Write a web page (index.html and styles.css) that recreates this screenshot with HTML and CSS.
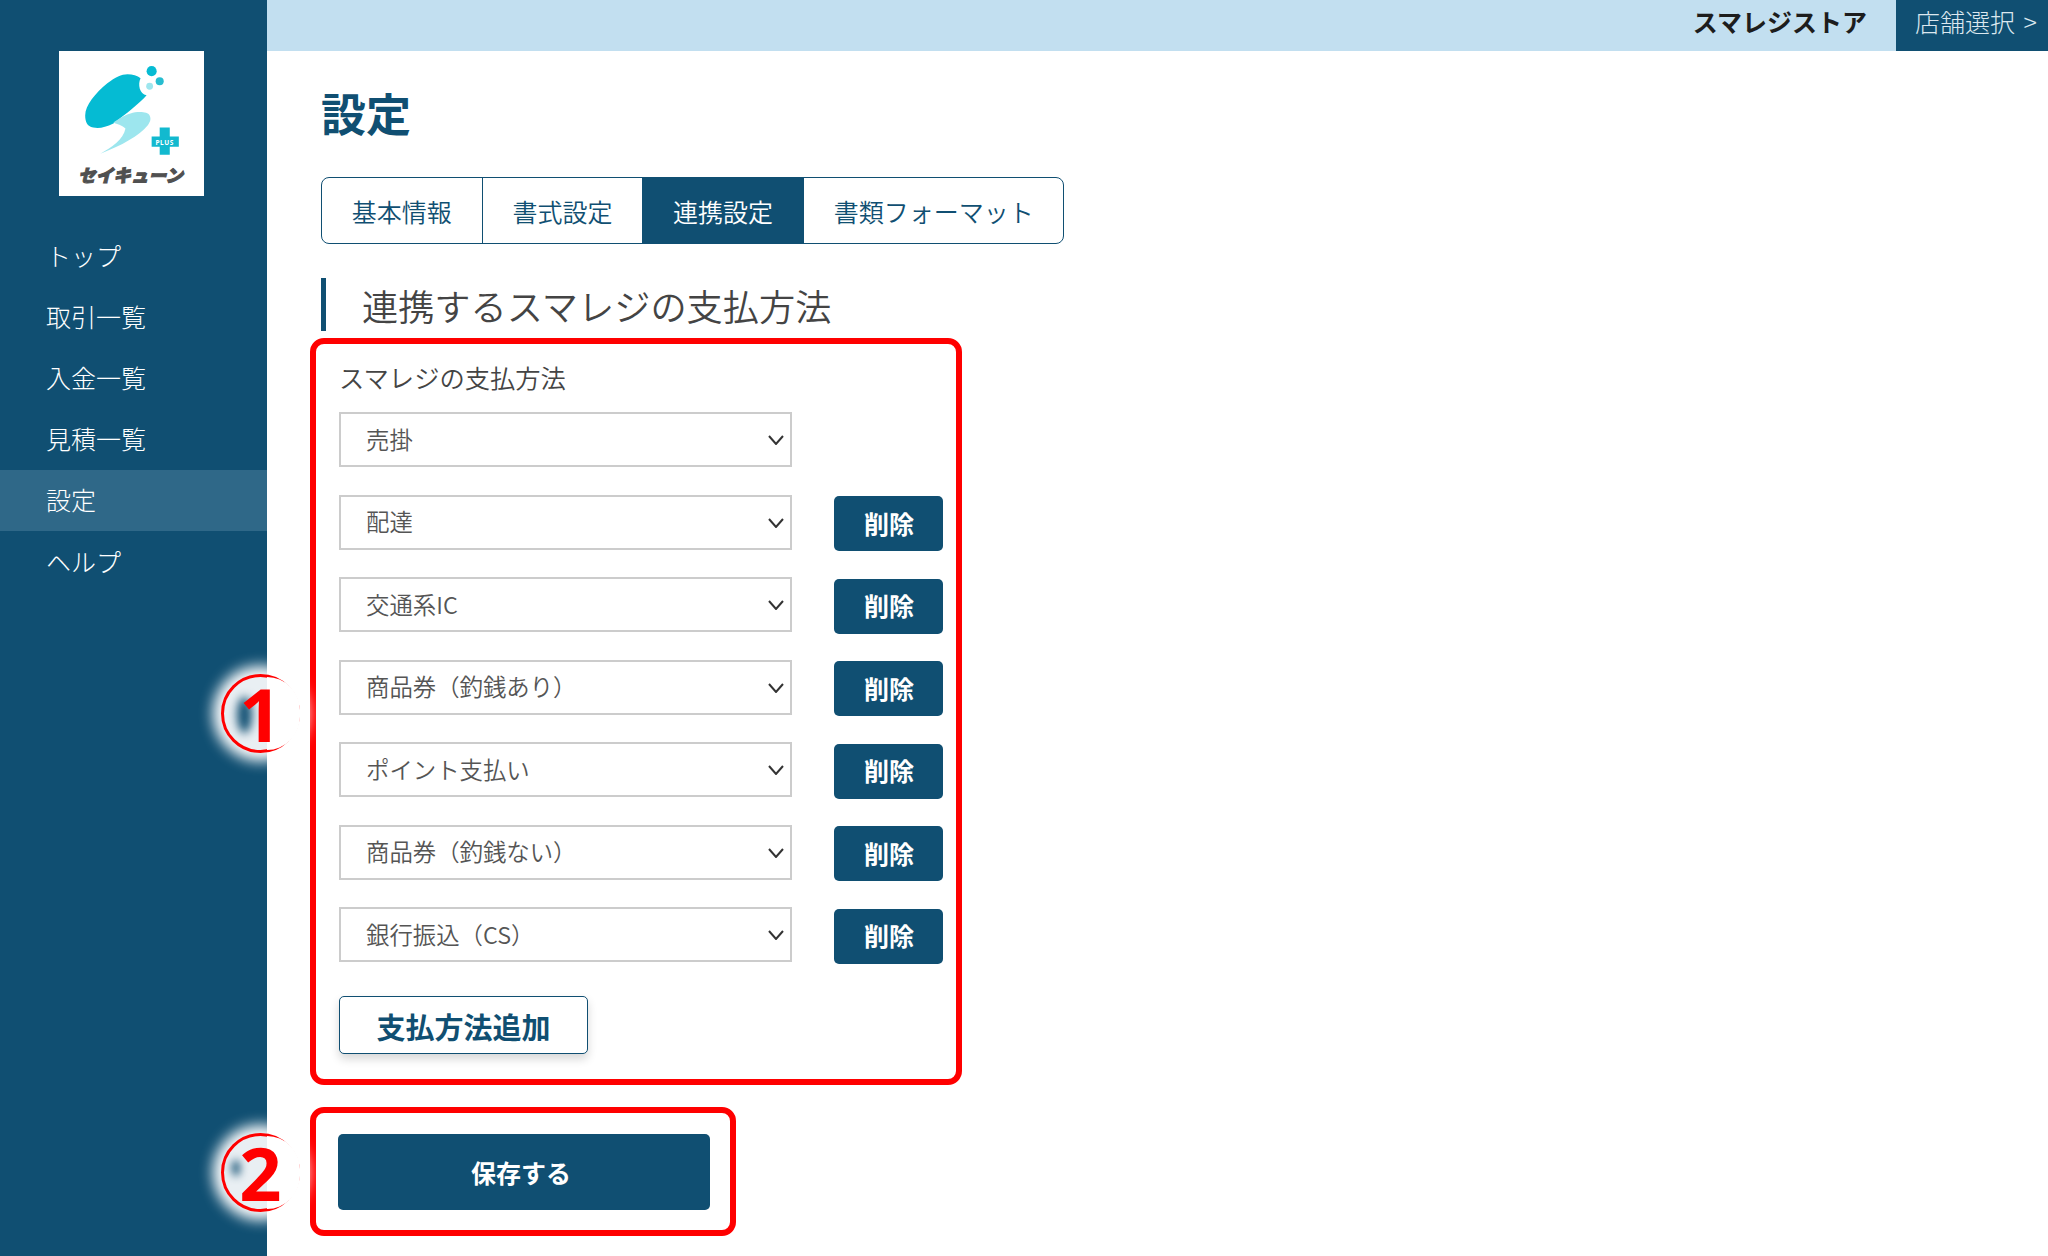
FILE: index.html
```html
<!DOCTYPE html>
<html lang="ja">
<head>
<meta charset="utf-8">
<title>設定</title>
<link rel="stylesheet" href="styles.css">
</head>
<body>
<div class="app">
  <aside class="sidebar">
    <div class="logo">
      <svg class="logo-art" viewBox="0 0 144 144" width="145" height="145">
        <path d="M26 64C26 54 36 42 48 32C56 26 62 23 68 23C73 23 78 24 81 27C78 33 80 43 87 44C80 52 66 63 54 72C46 76 40 77 34 76C28 75 26 70 26 64Z" fill="#05bbd3"/>
        <path d="M41 102C52 96 64 88 66 77C62 73 58 73 54 71C60 67 64 64 71 62C78 60 88 60 90 64C92 68 90 71 88 74C80 84 62 94 41 102Z" fill="#9de6ee"/>
        <circle cx="92" cy="20" r="5" fill="#05bbd3"/>
        <circle cx="100" cy="30" r="4" fill="#27bdd0"/>
        <circle cx="90" cy="35" r="3.4" fill="#9de6ee"/>
        <path d="M100 76H110V85H119V95H110V103H100V95H92V85H100Z" fill="#12b9cf"/>
        <text x="105" y="93" class="logo-plus" text-anchor="middle">PLUS</text>
        <text x="71" y="130" class="logo-name" text-anchor="middle">セイキューン</text>
      </svg>
    </div>
    <nav class="nav">
      <a class="nav-item">トップ</a>
      <a class="nav-item">取引一覧</a>
      <a class="nav-item">入金一覧</a>
      <a class="nav-item">見積一覧</a>
      <a class="nav-item nav-item-active">設定</a>
      <a class="nav-item">ヘルプ</a>
    </nav>
  </aside>
  <div class="main">
    <header class="topbar">
      <span class="store">スマレジストア</span>
      <a class="store-select">店舗選択 &gt;</a>
    </header>
    <section class="content">
      <h1 class="title">設定</h1>
      <div class="tabs">
        <a class="tab">基本情報</a>
        <a class="tab">書式設定</a>
        <a class="tab tab-active">連携設定</a>
        <a class="tab">書類フォーマット</a>
      </div>
      <h2 class="heading">連携するスマレジの支払方法</h2>
      <div class="mark-box mark-box-list">
        <div class="field-label">スマレジの支払方法</div>
        <div class="row">
          <div class="select-wrap"><select class="select"><option>売掛</option></select><svg class="chevron" viewBox="0 0 16 10" width="16" height="10"><path d="M1 1L8 9L15 1"/></svg></div>
        </div>
        <div class="row">
          <div class="select-wrap"><select class="select"><option>配達</option></select><svg class="chevron" viewBox="0 0 16 10" width="16" height="10"><path d="M1 1L8 9L15 1"/></svg></div>
          <button class="btn-delete">削除</button>
        </div>
        <div class="row">
          <div class="select-wrap"><select class="select"><option>交通系IC</option></select><svg class="chevron" viewBox="0 0 16 10" width="16" height="10"><path d="M1 1L8 9L15 1"/></svg></div>
          <button class="btn-delete">削除</button>
        </div>
        <div class="row">
          <div class="select-wrap"><select class="select"><option>商品券（釣銭あり）</option></select><svg class="chevron" viewBox="0 0 16 10" width="16" height="10"><path d="M1 1L8 9L15 1"/></svg></div>
          <button class="btn-delete">削除</button>
        </div>
        <div class="row">
          <div class="select-wrap"><select class="select"><option>ポイント支払い</option></select><svg class="chevron" viewBox="0 0 16 10" width="16" height="10"><path d="M1 1L8 9L15 1"/></svg></div>
          <button class="btn-delete">削除</button>
        </div>
        <div class="row">
          <div class="select-wrap"><select class="select"><option>商品券（釣銭ない）</option></select><svg class="chevron" viewBox="0 0 16 10" width="16" height="10"><path d="M1 1L8 9L15 1"/></svg></div>
          <button class="btn-delete">削除</button>
        </div>
        <div class="row row-last">
          <div class="select-wrap"><select class="select"><option>銀行振込（CS）</option></select><svg class="chevron" viewBox="0 0 16 10" width="16" height="10"><path d="M1 1L8 9L15 1"/></svg></div>
          <button class="btn-delete">削除</button>
        </div>
        <button class="btn-add">支払方法追加</button>
      </div>
      <div class="mark-box mark-box-save">
        <button class="btn-save">保存する</button>
      </div>
    </section>
  </div>
  <div class="callout callout-one"><span class="callout-digit">1</span></div>
  <div class="callout callout-two"><span class="callout-digit">2</span></div>
</div>
</body>
</html>
```
FILE: styles.css
```css
* { box-sizing: border-box; }
html, body { margin: 0; padding: 0; }
body {
  width: 2048px;
  height: 1256px;
  overflow: hidden;
  background: #fff;
  font-family: "Noto Sans CJK JP", "Noto Sans", sans-serif;
  color: #444;
}
.app { position: relative; display: flex; width: 2048px; height: 1256px; overflow: hidden; }

.sidebar { width: 267px; flex: none; background: #104f72; padding-top: 51px; }
.logo { width: 145px; height: 145px; margin-left: 59px; background: #fff; }
.logo-art { display: block; }
.logo-plus { font: 700 6.5px "Noto Sans", sans-serif; fill: #fff; letter-spacing: .6px; }
.logo-name {
  font: 900 17.5px "Noto Sans CJK JP", sans-serif;
  fill: #505050;
  font-style: italic;
  stroke: #505050;
  stroke-width: 1px;
}
.nav { margin-top: 29px; display: flex; flex-direction: column; }
.nav-item {
  height: 61.2px;
  display: flex;
  align-items: center;
  padding: 0 0 2px 46px;
  font-size: 25px;
  color: #fff;
  font-weight: 300;
}
.nav-item-active { background: #2f6888; }

.main { flex: 1; min-width: 0; }
.topbar { height: 51px; background: #c2dff0; display: flex; justify-content: flex-end; align-items: stretch; }
.store { align-self: center; font-size: 25px; font-weight: 700; color: #1d1d1d; margin-right: 29px; line-height: 42px; margin-top: -10px; }
.store-select {
  width: 152px;
  background: #104f72;
  color: #dce8ef;
  font-size: 25px;
  font-weight: 300;
  padding: 0 0 10px 19px;
  display: flex;
  align-items: center;
  white-space: pre;
  word-spacing: 3px;
}

.content { padding-left: 54px; }
.title { margin: 39px 0 41px; font-size: 45px; line-height: 46px; font-weight: 700; color: #104f72; }

.tabs {
  display: inline-flex;
  vertical-align: top;
  height: 67px;
  border: 1.5px solid #104f72;
  border-radius: 8px;
  overflow: hidden;
}
.tab {
  display: flex;
  align-items: center;
  padding: 0 29.8px;
  font-size: 25px;
  font-weight: 350;
  color: #104f72;
  border-left: 1px solid #104f72;
}
.tab:first-child { border-left: 0; }
.tab-active { background: #104f72; color: #fff; }

.heading {
  margin: 34px 0 7px;
  height: 53px;
  border-left: 5px solid #104f72;
  padding-left: 36px;
  font-size: 36.2px;
  line-height: 55px;
  font-weight: 350;
  color: #444;
}

.mark-box { border: 6px solid #f00; border-radius: 14px; }
.mark-box-list { width: 652px; margin-left: -11px; padding: 19px 13px 25px 23px; }
.mark-box-save { width: 426px; margin: 22px 0 0 -11px; padding: 21px 0 20px 22px; }

.field-label { font-size: 25.3px; line-height: 28px; margin-bottom: 21px; color: #444; font-weight: 350; }

.row { display: flex; align-items: flex-start; gap: 42px; height: 55px; margin-bottom: 27.5px; }
.row-last { margin-bottom: 34px; }
.select-wrap { position: relative; width: 453px; height: 55px; flex: none; }
.select {
  appearance: none;
  -webkit-appearance: none;
  width: 100%;
  height: 100%;
  background: #fff;
  border: 2px solid #ccc;
  border-radius: 0;
  padding: 0 40px 2px 25px;
  font-family: inherit;
  font-size: 23.4px;
  font-weight: 350;
  color: #555;
}
.chevron { position: absolute; right: 8px; top: 23px; fill: none; stroke: #333; stroke-width: 2; }

.btn-delete {
  width: 109px;
  height: 55px;
  margin-top: 1.5px;
  border: 0;
  border-radius: 5px;
  background: #104f72;
  color: #fff;
  font-family: inherit;
  font-size: 25px;
  font-weight: 700;
  padding: 0 0 2px 1px;
}
.btn-add {
  display: block;
  width: 249px;
  height: 57.5px;
  background: #fff;
  border: 1.5px solid #104f72;
  border-radius: 5px;
  box-shadow: 0 5px 10px rgba(0, 0, 0, .16);
  color: #104f72;
  font-family: inherit;
  font-size: 29px;
  font-weight: 700;
  padding: 3px 0 0;
}
.btn-save {
  display: block;
  width: 372px;
  height: 76px;
  border: 0;
  border-radius: 5px;
  background: #104f72;
  color: #fff;
  font-family: inherit;
  font-size: 25px;
  font-weight: 700;
  padding: 0 6px 0 0;
}

.callout {
  position: absolute;
  left: 221px;
  width: 79px;
  height: 79px;
  border: 3px solid #f00;
  border-radius: 50%;
  background: #e9eff3;
  box-shadow: 0 0 14px 8px #fff;
  display: flex;
  align-items: center;
  justify-content: center;
  overflow: visible;
}
.callout::before {
  content: "";
  position: absolute;
  left: 13px;
  top: 20px;
  width: 15px;
  height: 36px;
  border-radius: 50%;
  background: #104f72;
  filter: blur(5px);
}
.callout::after {
  content: "";
  position: absolute;
  left: 43px;
  top: 0;
  width: 33px;
  height: 73px;
  background: #fff;
  border-radius: 0 40px 40px 0;
}
.callout-one { top: 674px; }
.callout-two { top: 1133px; }
.callout-two::before { left: 8px; top: 24px; width: 8px; height: 16px; filter: blur(4px); }
.callout-digit {
  position: relative;
  z-index: 1;
  font-family: "Open Sans", sans-serif;
  font-weight: 700;
  font-size: 74px;
  line-height: 73px;
  color: #f00;
}
```
